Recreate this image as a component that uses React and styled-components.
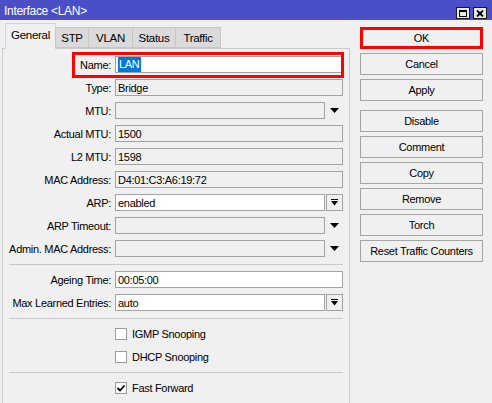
import React from 'react';
import styled, { createGlobalStyle } from 'styled-components';

const Global = createGlobalStyle`
  html, body { margin: 0; padding: 0; background: #f0f0f0; }
  body { font-family: "Liberation Sans", Arial, sans-serif; }
`;

const Window = styled.div`
  width: 492px;
  height: 403px;
  overflow: hidden;
  background: #f0f0f0;
  display: flex;
  flex-direction: column;
  font-family: "Liberation Sans", Arial, sans-serif;
  font-size: 11px;
  letter-spacing: -0.3px;
  color: #000;
`;

const TitleBar = styled.div`
  height: 20px;
  flex-shrink: 0;
  background: #4b4fc7;
  color: #fff;
  display: flex;
  align-items: center;
  padding: 0 5px 0 4px;
  font-size: 12px;
`;

const Title = styled.div`
  flex: 1;
  padding-top: 1px;
`;

const TitleButtons = styled.div`
  display: flex;
  gap: 3px;
  align-self: flex-end;
  margin-bottom: 1px;
`;

const TitleButton = styled.div`
  width: 14px;
  height: 12px;
  box-sizing: border-box;
  border: 1px solid #1a1a1a;
  background: #e8e8e8;
  display: flex;
  align-items: center;
  justify-content: center;
`;

const Body = styled.div`
  flex: 1;
  display: flex;
  min-height: 0;
`;

const Main = styled.div`
  width: 348px;
  margin-left: 2px;
  padding-top: 3px;
  display: flex;
  flex-direction: column;
`;

const TabStrip = styled.div`
  display: flex;
  align-items: flex-end;
  height: 26px;
  padding-left: 3px;
  margin-bottom: -1px;
  position: relative;
  z-index: 1;
`;

const Tab = styled.div`
  box-sizing: border-box;
  width: ${p => p.$w}px;
  display: flex;
  align-items: center;
  justify-content: center;
  border: 1px solid ${p => (p.$active ? '#d4d4d4' : '#c6c6c6')};
  border-bottom: ${p => (p.$active ? 'none' : '1px solid #c6c6c6')};
  background: ${p => (p.$active ? '#f0f0f0' : '#dadada')};
  height: ${p => (p.$active ? 26 : 21)}px;
  margin-bottom: ${p => (p.$active ? 0 : 1)}px;
  margin-left: ${p => (p.$first ? 0 : -1)}px;
  padding-bottom: ${p => (p.$active ? 3 : 0)}px;
  font-size: 11.5px;
`;

const Panel = styled.div`
  flex: 1;
  border: 1px solid #cacaca;
  border-bottom: none;
  padding: 4px 6px 0 0;
  display: flex;
  flex-direction: column;
`;

const Row = styled.div`
  position: relative;
  display: grid;
  grid-template-columns: 108px 1fr;
  column-gap: 4px;
  height: 23px;
  align-items: center;
`;

const Label = styled.div`
  text-align: right;
  white-space: nowrap;
`;

const Field = styled.div`
  display: flex;
  align-items: center;
  gap: 1px;
`;

const Input = styled.div`
  flex: 1;
  height: 17px;
  box-sizing: border-box;
  border: 1px solid #a3a3a3;
  background: ${p => (p.$enabled ? '#ffffff' : '#f0f0f0')};
  padding-left: 2px;
  display: flex;
  align-items: center;
  white-space: nowrap;
  overflow: hidden;
`;

const Selected = styled.span`
  background: #0078d7;
  color: #fff;
  padding: 1px 1px;
  line-height: 13px;
`;

const ArrowCell = styled.div`
  width: 17px;
  height: 17px;
  box-sizing: border-box;
  display: flex;
  align-items: center;
  justify-content: center;
  border: ${p => (p.$boxed ? '1px solid #a3a3a3' : 'none')};
  background: ${p => (p.$boxed ? '#f0f0f0' : 'transparent')};
`;

const Highlight = styled.div`
  position: absolute;
  top: -1px;
  bottom: -2px;
  left: 69px;
  right: -1px;
  border: 3px solid #ff0000;
  pointer-events: none;
`;

const Separator = styled.div`
  height: 1px;
  background: #c8c8c8;
  margin: 4px 0 3px 6px;
`;

const CheckBox = styled.div`
  width: 12px;
  height: 12px;
  box-sizing: border-box;
  border: 1px solid #9c9c9c;
  background: #ffffff;
  display: flex;
  align-items: center;
  justify-content: center;
  margin-right: 4px;
`;

const Side = styled.div`
  width: 123px;
  margin-left: 10px;
  padding-top: 7px;
  display: flex;
  flex-direction: column;
  gap: 4px;
`;

const Button = styled.div`
  height: 22px;
  box-sizing: border-box;
  border: ${p => (p.$highlight ? '3px solid #ff0000' : '1px solid #a5a5a5')};
  background: #f0f0f0;
  display: flex;
  align-items: center;
  justify-content: center;
  margin-top: ${p => (p.$groupStart ? 5 : 0)}px;
  white-space: nowrap;
`;

const PlainArrow = () => (
  <svg width="9" height="5" viewBox="0 0 9 5">
    <polygon points="0,0 9,0 4.5,5" fill="#000" />
  </svg>
);

const BoxArrow = () => (
  <svg width="7" height="7" viewBox="0 0 7 7">
    <rect x="0" y="0" width="7" height="1" fill="#000" />
    <polygon points="0,2 7,2 3.5,6.5" fill="#000" />
  </svg>
);

const Check = () => (
  <svg width="10" height="10" viewBox="0 0 10 10">
    <polyline points="1.5,5 4,7.5 8.5,2.5" fill="none" stroke="#000" strokeWidth="1.8" />
  </svg>
);

const tabs = [
  { name: 'General', w: 51, active: true },
  { name: 'STP', w: 34 },
  { name: 'VLAN', w: 45 },
  { name: 'Status', w: 44 },
  { name: 'Traffic', w: 46 },
];

const groupA = [
  { label: 'Name:', value: 'LAN', enabled: true, selected: true, highlight: true },
  { label: 'Type:', value: 'Bridge' },
  { label: 'MTU:', value: '', arrow: 'plain' },
  { label: 'Actual MTU:', value: '1500' },
  { label: 'L2 MTU:', value: '1598' },
  { label: 'MAC Address:', value: 'D4:01:C3:A6:19:72' },
  { label: 'ARP:', value: 'enabled', enabled: true, arrow: 'box' },
  { label: 'ARP Timeout:', value: '', arrow: 'plain' },
  { label: 'Admin. MAC Address:', value: '', arrow: 'plain' },
];

const groupB = [
  { label: 'Ageing Time:', value: '00:05:00', enabled: true },
  { label: 'Max Learned Entries:', value: 'auto', enabled: true, arrow: 'box' },
];

const buttons = [
  { text: 'OK', highlight: true },
  { text: 'Cancel' },
  { text: 'Apply' },
  { text: 'Disable', groupStart: true },
  { text: 'Comment' },
  { text: 'Copy' },
  { text: 'Remove' },
  { text: 'Torch' },
  { text: 'Reset Traffic Counters' },
];

const FieldRow = ({ f }) => (
  <Row>
    <Label>{f.label}</Label>
    <Field>
      <Input $enabled={f.enabled}>
        {f.selected ? <Selected>{f.value}</Selected> : f.value}
      </Input>
      {f.arrow && (
        <ArrowCell $boxed={f.arrow === 'box'}>
          {f.arrow === 'box' ? <BoxArrow /> : <PlainArrow />}
        </ArrowCell>
      )}
    </Field>
    {f.highlight && <Highlight />}
  </Row>
);

const CheckRow = ({ label, checked }) => (
  <Row>
    <span />
    <Field>
      <CheckBox>{checked && <Check />}</CheckBox>
      <span>{label}</span>
    </Field>
  </Row>
);

export default function App() {
  return (
    <Window>
      <Global />
      <TitleBar>
        <Title>Interface &lt;LAN&gt;</Title>
        <TitleButtons>
          <TitleButton>
            <svg width="8" height="7" viewBox="0 0 8 7">
              <rect x="0.5" y="0.5" width="7" height="6" fill="none" stroke="#000" strokeWidth="1" />
              <rect x="0" y="0" width="8" height="2" fill="#000" />
            </svg>
          </TitleButton>
          <TitleButton>
            <svg width="8" height="7" viewBox="0 0 8 7">
              <path d="M1 0.5 L7 6.5 M7 0.5 L1 6.5" stroke="#000" strokeWidth="1.8" />
            </svg>
          </TitleButton>
        </TitleButtons>
      </TitleBar>
      <Body>
        <Main>
          <TabStrip>
            {tabs.map((t, i) => (
              <Tab key={t.name} $w={t.w} $active={t.active} $first={i === 0}>
                {t.name}
              </Tab>
            ))}
          </TabStrip>
          <Panel>
            {groupA.map(f => <FieldRow key={f.label} f={f} />)}
            <Separator />
            {groupB.map(f => <FieldRow key={f.label} f={f} />)}
            <Separator />
            <CheckRow label="IGMP Snooping" />
            <CheckRow label="DHCP Snooping" />
            <Separator />
            <CheckRow label="Fast Forward" checked />
          </Panel>
        </Main>
        <Side>
          {buttons.map(b => (
            <Button key={b.text} $highlight={b.highlight} $groupStart={b.groupStart}>
              {b.text}
            </Button>
          ))}
        </Side>
      </Body>
    </Window>
  );
}
